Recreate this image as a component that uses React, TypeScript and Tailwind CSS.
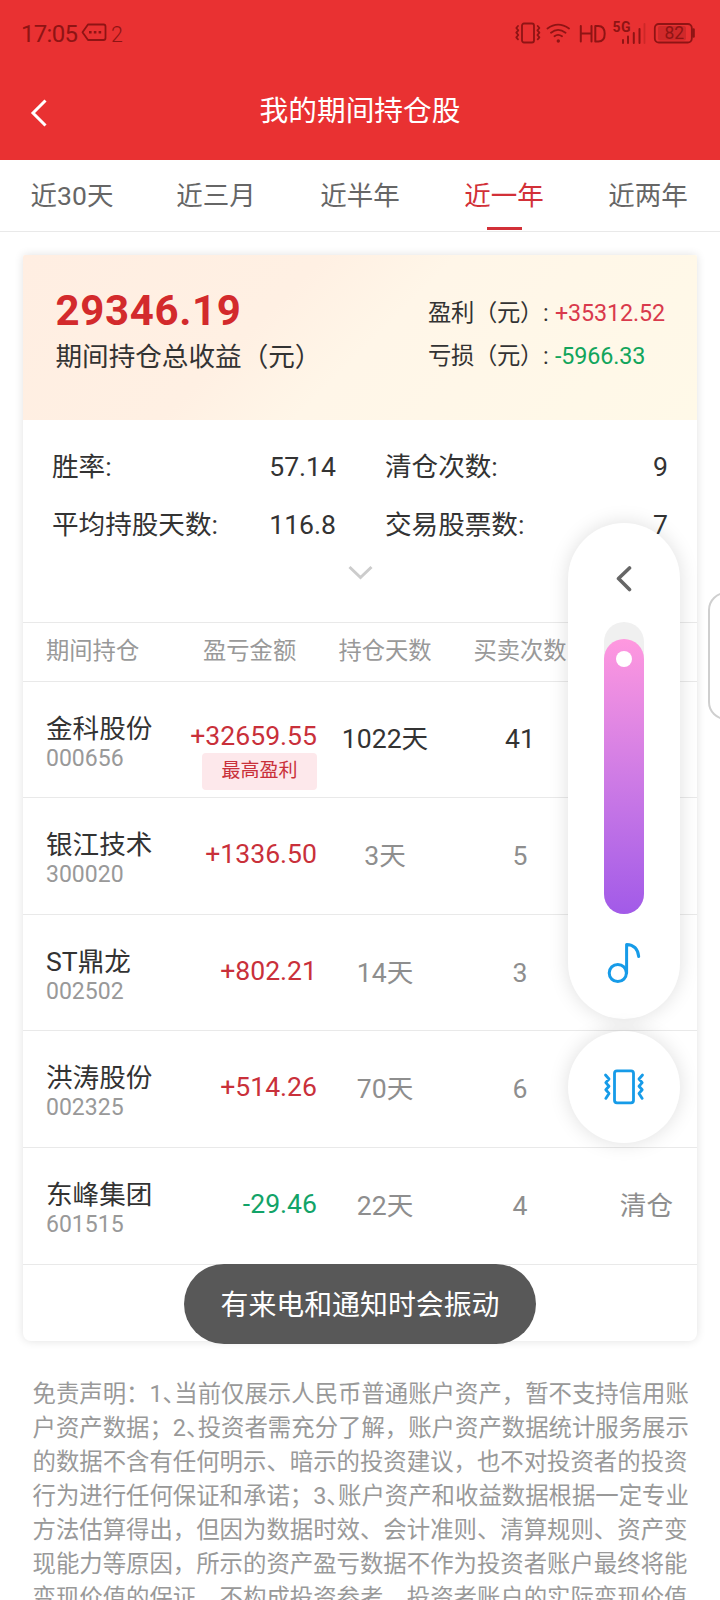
import type { ReactNode } from "react";

const INK = "#8f1414";

const tabs = ["近30天", "近三月", "近半年", "近一年", "近两年"];

type Holding = {
  name: string;
  code: string;
  amount: string;
  gain: boolean;
  days: string;
  trades: string;
  tag?: string;
  status?: string;
};

const holdings: Holding[] = [
  { name: "金科股份", code: "000656", amount: "+32659.55", gain: true, days: "1022天", trades: "41", tag: "最高盈利" },
  { name: "银江技术", code: "300020", amount: "+1336.50", gain: true, days: "3天", trades: "5" },
  { name: "ST鼎龙", code: "002502", amount: "+802.21", gain: true, days: "14天", trades: "3" },
  { name: "洪涛股份", code: "002325", amount: "+514.26", gain: true, days: "70天", trades: "6" },
  { name: "东峰集团", code: "601515", amount: "-29.46", gain: false, days: "22天", trades: "4", status: "清仓" },
];

const Pause = () => <span className="[font-feature-settings:'halt']">、</span>;

const disclaimer: ReactNode[] = [
  <>免责声明：1<Pause />当前仅展示人民币普通账户资产，暂不支持信用账</>,
  <>户资产数据；2<Pause />投资者需充分了解，账户资产数据统计服务展示</>,
  <>的数据不含有任何明示、暗示的投资建议，也不对投资者的投资</>,
  <>行为进行任何保证和承诺；3<Pause />账户资产和收益数据根据一定专业</>,
  <>方法估算得出，但因为数据时效、会计准则、清算规则、资产变</>,
  <>现能力等原因，所示的资产盈亏数据不作为投资者账户最终将能</>,
  <>变现价值的保证，不构成投资参考，投资者账户的实际变现价值</>,
];

function StatusBar() {
  return (
    <div className="flex h-[66px] items-center justify-between pl-[21px] pr-[25px] text-[#8f1414]">
      <div className="flex h-[66px] items-center">
        <span className="w-[60px] pt-[2px] text-[24px] leading-[34px] tracking-[-0.7px]">17:05</span>
        <svg className="h-[20px] w-[26px]" viewBox="0 0 26 20" fill="none" stroke={INK} strokeWidth="1.8" strokeLinejoin="round">
          <path d="M7 1.5H22.5Q24.5 1.5 24.5 3.5V15Q24.5 17 22.5 17H7L1.5 9.3Z" />
          <path d="M8 9.3h2.6M12.8 9.3h2.6M17.6 9.3h2.6" strokeWidth="2.4" />
        </svg>
        <span className="ml-[4px] mt-[4px] text-[21.5px] font-light leading-[34px]">2</span>
      </div>
      <svg className="h-[26px] w-[180px]" viewBox="0 0 180 26" fill="none" stroke={INK} strokeWidth="1.8" strokeLinecap="round" strokeLinejoin="round">
        <rect x="7" y="3.5" width="12" height="19" rx="2" />
        <path d="M3 6l-1.7 2 2 2.3-2 2.4 2 2.3-2 2.4 1.7 2M22.7 6l1.7 2-2 2.3 2 2.4-2 2.3 2 2.4-1.7 2" />
        <path d="M32.5 8.5Q43 .6 54 8.5M36 12.7Q43 7 50.5 12.7M39.500 16.3Q43 13.5 47 16.3" />
        <circle cx="43.3" cy="21" r=".8" fill={INK} />
        <path d="M65.8 6v15.5M76.5 6v15.5M65.8 13.5h10.7M80.3 6v15.5h3q6.400 0 6.400-7.700T83.3 6z" strokeWidth="2" />
        <text x="97.500" y="12" fontSize="14" fontWeight="700" fill={INK} stroke="none" textLength="18">5G</text>
        <path d="M108 20v3M113 16.500v6.500M118.800 13v10M124.500 9v14" strokeWidth="2" />
        <path d="M129.500 4v19" opacity=".3" />
        <rect x="139.800" y="4" width="37" height="18.500" rx="4" />
        <rect x="143" y="6" width="28" height="14.500" rx="2" fill={INK} opacity=".28" stroke="none" />
        <path d="M178.500 9.500v7" strokeWidth="2.600" />
        <text x="149.500" y="19.300" fontSize="17.500" fill={INK} stroke="none" textLength="19.500">82</text>
      </svg>
    </div>
  );
}

function TopBar() {
  return (
    <header className="h-[160px] bg-[#e93132]">
      <StatusBar />
      <div className="grid h-[90px] grid-cols-[60px_1fr_60px] items-center">
        <svg className="ml-[30px] mt-[3px] h-[28px] w-[18px]" viewBox="0 0 18 28" fill="none" stroke="#fff" strokeWidth="3">
          <path d="M15.500 1.500L3 14l12.500 12.500" />
        </svg>
        <h1 className="text-center text-[28.7px] font-normal leading-[40px] text-white">我的期间持仓股</h1>
      </div>
    </header>
  );
}

function Tabs() {
  return (
    <nav className="grid h-[72px] grid-cols-5 border-b border-[#e9e9e9]">
      {tabs.map((t) => (
        <div key={t} className={t === "近一年" ? "flex flex-col items-center text-[#d23038]" : "flex flex-col items-center text-[#666]"}>
          <span className="mt-[16px] text-[26.5px] leading-[40px]">{t}</span>
          {t === "近一年" && <span className="mt-[11px] h-[3px] w-[35px] bg-[#d23038]" />}
        </div>
      ))}
    </nav>
  );
}

function Summary() {
  return (
    <section className="flex h-[165px] justify-between bg-[linear-gradient(135deg,#ffeee2_0%,#fff0e3_36%,#fff6e8_52%,#fff9e8_100%)] pl-[32.500px] pr-[32px]">
      <div className="pt-[31px]">
        <div className="text-[42px] font-bold leading-[50px] tracking-[0.65px] text-[#d32a2c]">29346.19</div>
        <div className="mt-[1px] text-[26.6px] leading-[40px] text-[#333]">期间持仓总收益（元）</div>
      </div>
      <div className="w-[237px] whitespace-nowrap pt-[37px] text-[23.300px] leading-[43px] text-[#333]">
        <div className="flex">
          <span className="w-[127px]"><span className="tracking-[-0.3px]">盈利（元）</span>:</span>
          <span className="tracking-[-0.1px] text-[#d93a4c]">+35312.52</span>
        </div>
        <div className="flex">
          <span className="w-[127px]"><span className="tracking-[-0.3px]">亏损（元）</span>:</span>
          <span className="tracking-[-0.1px] text-[#12a55c]">-5966.33</span>
        </div>
      </div>
    </section>
  );
}

function Stats() {
  return (
    <section className="h-[203px] border-b border-[#e9e9e9] px-[29px] pt-[18px] text-[26.6px] leading-[58px] text-[#333]">
      <div className="grid grid-cols-[284px_1fr] gap-x-[49px]">
        <div className="flex justify-between"><span>胜率:</span><span>57.14</span></div>
        <div className="flex justify-between"><span>清仓次数:</span><span>9</span></div>
        <div className="flex justify-between"><span>平均持股天数:</span><span>116.8</span></div>
        <div className="flex justify-between"><span>交易股票数:</span><span>7</span></div>
      </div>
      <svg className="mx-auto mt-[11px] h-[16px] w-[26px]" viewBox="0 0 26 16" fill="none" stroke="#ccc" strokeWidth="3">
        <path d="M2.500 2l11 10.500L24.500 2" />
      </svg>
    </section>
  );
}

const columns = "grid grid-cols-[140px_132px_134px_136px_1fr] pl-[23px] pr-[24px]";

function Row({ h }: { h: Holding }) {
  const muted = h.tag ? "pt-[39px] text-[#333]" : "pt-[40px] text-[#8e8e8e]";
  return (
    <div className={`${columns} h-[116.600px] border-b border-[#e9e9e9] text-[26.6px]`}>
      <div className="whitespace-nowrap pt-[29px]">
        <div className="leading-[36px] text-[#333]">{h.name}</div>
        <div className="text-[23px] leading-[24px] text-[#999]">{h.code}</div>
      </div>
      <div className={`flex flex-col items-end ${h.tag ? "pt-[37px]" : "pt-[39px]"} -ml-[20px] pr-[1px]`}>
        <span className={`leading-[34px] ${h.gain ? "text-[#c9303a]" : "text-[#12a368]"}`}>{h.amount}</span>
        {h.tag && (
          <span className="flex h-[37px] w-[115px] items-center justify-center rounded-[4px] bg-[#fde8eb] text-[19px] leading-[28px] text-[#c9303a]">{h.tag}</span>
        )}
      </div>
      <div className={`text-center leading-[36px] ${muted}`}>{h.days}</div>
      <div className={`text-center leading-[36px] ${muted}`}>{h.trades}</div>
      <div className={`text-right leading-[36px] ${muted}`}>{h.status}</div>
    </div>
  );
}

function VolumePanel() {
  return (
    <aside className="absolute left-[568px] top-[523px] flex w-[112px] flex-col gap-[12px]">
      <div className="flex h-[496px] flex-col items-center rounded-[56px] bg-white pt-[41px] shadow-[0_0_20px_rgba(0,0,0,0.13)]">
        <svg className="h-[28px] w-[20px]" viewBox="0 0 20 28" fill="none" stroke="#666" strokeWidth="3.600" strokeLinecap="round" strokeLinejoin="round">
          <path d="M15.500 4L4.500 14.500L15.500 25.500" />
        </svg>
        <div className="mt-[30px] h-[292px] w-[40px] rounded-[20px] bg-[#f0f0f0] pt-[17px]">
          <div className="flex h-[275px] justify-center rounded-[20px] bg-linear-to-b from-[#ff98df] to-[#a25ae8] pt-[12px]">
            <span className="h-[16px] w-[16px] rounded-full bg-white" />
          </div>
        </div>
        <svg className="mt-[26px] h-[46px] w-[40px]" viewBox="0 0 40 46" fill="none" stroke="#169be8" strokeWidth="3" strokeLinecap="round">
          <circle cx="13.800" cy="33" r="8.600" />
          <path d="M22.600 33V4.500Q33.500 5 34.700 16.500" strokeLinejoin="round" />
        </svg>
      </div>
      <div className="flex h-[112px] items-center justify-center rounded-full bg-white shadow-[0_0_20px_rgba(0,0,0,0.13)]">
        <svg className="h-[40px] w-[44px]" viewBox="0 0 44 40" fill="none" stroke="#169be8" strokeWidth="2.800" strokeLinecap="round" strokeLinejoin="round">
          <rect x="12.500" y="3.800" width="19" height="32" rx="2.500" />
          <path d="M3.500 8l3.500 4-3.200 3.600 3.200 3.600-3.200 3.600 3.200 3.600-3.200 5M40.500 8l-3.500 4 3.200 3.600-3.200 3.600 3.200 3.600-3.200 3.600 3.200 5" />
        </svg>
      </div>
    </aside>
  );
}

export default function App() {
  return (
    <main className="relative h-[1600px] w-[720px] overflow-hidden bg-white font-[Roboto,'Noto_Sans_CJK_SC',sans-serif]">
      <TopBar />
      <Tabs />
      <article className="ml-[23px] mt-[23px] h-[1086px] w-[674px] overflow-hidden rounded-b-[8px] rounded-t-[2px] shadow-[0_0_10px_rgba(0,0,0,0.12)]">
        <Summary />
        <Stats />
        <div className={`${columns} h-[58.600px] items-center border-b border-[#e9e9e9] pb-[1px] text-[23.300px] leading-[34px] text-[#999]`}>
          <span>期间持仓</span>
          <span className="whitespace-nowrap pl-[17px]">盈亏金额</span>
          <span className="text-center">持仓天数</span>
          <span className="text-center">买卖次数</span>
        </div>
        {holdings.map((h) => (
          <Row key={h.code} h={h} />
        ))}
      </article>
      <footer className="ml-[32.500px] mt-[36px] w-[655px] text-[23.4px] leading-[34px] text-[#999]">
        {disclaimer.map((line, i) => (
          <p key={i} className="whitespace-nowrap">{line}</p>
        ))}
      </footer>
      <div className="absolute left-[708px] top-[592px] h-[128px] w-[40px] rounded-[18px] border-2 border-[#cfcfcf] bg-white" />
      <VolumePanel />
      <div className="absolute left-[184px] top-[1264px] flex h-[80px] w-[352px] items-center justify-center rounded-full bg-[#585858] pt-[3px] text-[27.9px] leading-[40px] text-white">
        有来电和通知时会振动
      </div>
    </main>
  );
}
